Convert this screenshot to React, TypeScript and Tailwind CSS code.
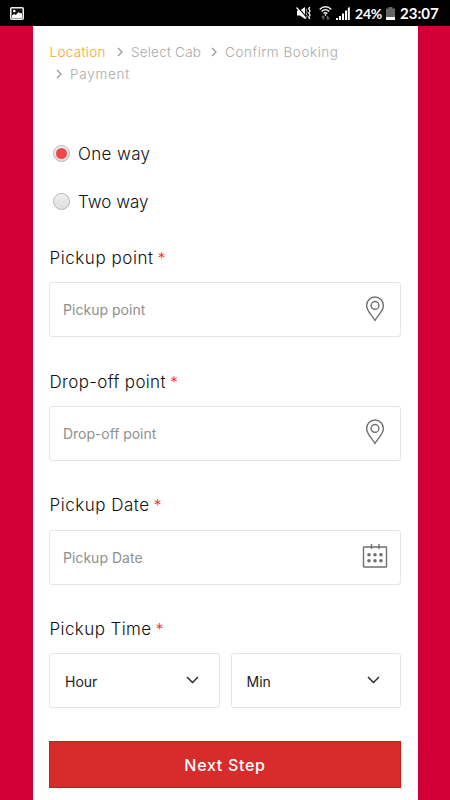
import React, { useState } from 'react';

const PinIcon = () => (
  <svg width="20" height="26" viewBox="0 0 20 26" fill="none" stroke="#707070" strokeWidth="1.4">
    <path d="M10 24.5C8.4 20.6 1.6 15.4 1.6 9.4a8.4 8.4 0 0 1 16.8 0c0 6-6.8 11.2-8.4 15.1Z" strokeLinejoin="round" />
    <circle cx="10" cy="9.4" r="3.9" />
  </svg>
);

const CalendarIcon = () => (
  <svg width="26" height="26" viewBox="0 0 26 26" fill="none" stroke="#707070" strokeWidth="1.4">
    <rect x="1.5" y="4" width="23" height="20" rx="0.5" />
    <path d="M9.5 1v5M17 1v5" />
    <g fill="#707070" stroke="none">
      <circle cx="7" cy="11.7" r="1.8" />
      <circle cx="13" cy="11.7" r="1.8" />
      <circle cx="19" cy="11.7" r="1.8" />
      <circle cx="7" cy="17.7" r="1.8" />
      <circle cx="13" cy="17.7" r="1.8" />
      <circle cx="19" cy="17.7" r="1.8" />
    </g>
  </svg>
);

const CrumbArrow = () => (
  <svg width="6" height="10" viewBox="0 0 6 10" fill="none" stroke="#999" strokeWidth="1.3" className="shrink-0">
    <path d="M1 1l4 4-4 4" />
  </svg>
);

const StatusBar = () => (
  <header className="flex h-[26px] items-center bg-black pl-[10px] pr-[12px] text-white">
    <svg width="14" height="13" viewBox="0 0 14 13">
      <rect x="0.75" y="0.75" width="12.5" height="11.5" rx="1" fill="#111" stroke="#eee" strokeWidth="1.5" />
      <path d="M2 11.3V8.4l2-1.3 1.8.8L8.6 5l1.4 1.6.8-.8 1.2 1v4.5Z" fill="#fff" />
      <circle cx="4.3" cy="4" r="1.3" fill="#fff" />
    </svg>

    <svg width="15" height="14" viewBox="0 0 15 14" className="ml-auto">
      <path d="M1 4.5h3L9 1v12L4 9.5H1Z" fill="#fff" />
      <path d="M1.5 1l9 10.5" stroke="#000" strokeWidth="1.2" />
      <path d="M.5 1.5l9.5 11" stroke="#fff" strokeWidth="1.2" />
      <path d="M11 2.5l-.8 1.8 1 1.8-1 1.8 1 1.8-1 1.8" stroke="#aaa" strokeWidth="1" fill="none" />
      <path d="M13.8 1l-1 2 1.2 2-1.2 2 1.2 2-1.2 2 1 2" stroke="#fff" strokeWidth="1.3" fill="none" />
    </svg>
    <svg width="13" height="14" viewBox="0 0 13 14" className="ml-[8px]" fill="none" stroke="#eee" strokeWidth="1.5">
      <path d="M.7 3.5C4-.1 9-.1 12.3 3.5M2.7 5.5c2.2-2.3 5.4-2.3 7.6 0M4.6 7.5c1.1-1.1 2.7-1.1 3.8 0" />
      <path d="M4.5 13.5V10M3 11.5l1.5-1.7M8.5 10v3.5M10 11.8l-1.5 1.7" stroke="#666" />
      <circle cx="6.5" cy="8.9" r="0.9" fill="#eee" stroke="none" />
    </svg>
    <svg width="14" height="13" viewBox="0 0 14 13" className="ml-[4px]" fill="#fff">
      <path d="M0 11h2v2H0zM3 9h2v4H3zM6 6.5h2V13H6zM9 3.5h2V13H9zM11.8 1l2-1v13h-2z" />
    </svg>
    <span className="ml-[5px] w-[29px] whitespace-nowrap font-['Lato',sans-serif] text-[14px] leading-[27px] font-bold tracking-[-0.2px]">24%</span>
    <svg width="9" height="13" viewBox="0 0 9 13" className="ml-[2px]">
      <path d="M2.5 0h4v1.5H9V10H0V1.5h2.5Z" fill="#666" />
      <path d="M0 10h9v3H0Z" fill="#fff" />
    </svg>
    <span className="ml-[5px] w-[38px] whitespace-nowrap font-['Lato',sans-serif] text-[15px] leading-[27px] font-bold">23:07</span>
  </header>
);

interface RadioProps {
  label: string;
  checked: boolean;
  onSelect: () => void;
  tracking: string;
}

const Radio: React.FC<RadioProps> = ({ label, checked, onSelect, tracking }) => (
  <button type="button" role="radio" aria-checked={checked} onClick={onSelect} className="flex h-6 items-center gap-2">
    <span className="flex h-[17px] w-[17px] items-center justify-center rounded-full border border-[#b5b5b5] bg-gradient-to-b from-[#f0f0f0] to-[#dedede]">
      {checked && <span className="h-[11px] w-[11px] rounded-full bg-[#ef4848]" />}
    </span>
    <span className={`pt-[2px] text-[17px] leading-6 font-light text-[#111] ${tracking}`}>{label}</span>
  </button>
);

interface LabelProps {
  text: string;
  tracking: string;
}

const Label: React.FC<LabelProps> = ({ text, tracking }) => (
  <div className={`h-6 pl-[0.5px] whitespace-nowrap text-[17px] leading-[25px] font-light text-[#111] ${tracking}`}>
    {text}
    <span className="ml-[4px] text-[16px] text-[#ff1f1f]">*</span>
  </div>
);

interface FieldProps extends LabelProps {
  icon: React.ReactNode;
  inputTracking: string;
}

const Field: React.FC<FieldProps> = ({ text, tracking, icon, inputTracking }) => (
  <div className="h-[123.7px]">
    <Label text={text} tracking={tracking} />
    <div className="mt-[12.3px] flex h-[55px] items-center justify-between rounded-[3px] border border-[#e5e5e5] pr-[12px] pl-[13px]">
      <input
        aria-label={text}
        placeholder={text}
        className={`w-60 bg-transparent text-[14px] font-normal outline-none placeholder:text-[#909090] ${inputTracking}`}
      />
      <span className="flex w-[26px] -translate-y-px justify-center">{icon}</span>
    </div>
  </div>
);

const TimeSelect: React.FC<{ label: string }> = ({ label }) => (
  <button type="button" className="flex h-[55px] flex-1 items-center justify-between rounded-[3px] border border-[#e5e5e5] pr-[20px] pl-[15px]">
    <span className="pt-px text-[14px] text-[#222]">{label}</span>
    <svg width="13" height="8" viewBox="0 0 13 8" fill="none" stroke="#222" strokeWidth="1.4" className="-translate-y-px">
      <path d="M1 1l5.5 5.5L12 1" />
    </svg>
  </button>
);

export default function App() {
  const [trip, setTrip] = useState('one');

  return (
    <div className="flex h-[800px] w-[450px] flex-col overflow-hidden bg-[#d00037] font-['Inter',sans-serif]">
      <StatusBar />
      <main className="ml-[33px] w-[385px] flex-1 bg-white pr-[17px] pl-[16px]">
        <nav className="h-[108px] pt-[15px] text-[13.5px] leading-[22px] font-light text-[#aaa]">
          <div className="flex items-center pl-[0.5px] whitespace-nowrap">
            <span className="w-[67.5px] tracking-[0.3px] text-[#f9a51a]">Location</span>
            <CrumbArrow />
            <span className="ml-[8px] w-[80px] tracking-[0.2px]">Select Cab</span>
            <CrumbArrow />
            <span className="ml-[8px] tracking-[0.55px]">Confirm Booking</span>
          </div>
          <div className="flex items-center pl-[7px]">
            <CrumbArrow />
            <span className="ml-[8px] tracking-[0.75px]">Payment</span>
          </div>
        </nav>

        <div role="radiogroup" className="flex flex-col gap-6 pt-[7px] pl-[4px]">
          <Radio label="One way" checked={trip === 'one'} onSelect={() => setTrip('one')} tracking="tracking-[0.35px]" />
          <Radio label="Two way" checked={trip === 'two'} onSelect={() => setTrip('two')} tracking="tracking-[0px]" />
        </div>

        <div className="pt-[33px]">
          <Field text="Pickup point" tracking="tracking-[0.55px]" inputTracking="tracking-[0.03px]" icon={<PinIcon />} />
          <Field text="Drop-off point" tracking="tracking-[0.35px]" inputTracking="tracking-[-0.05px]" icon={<PinIcon />} />
          <Field text="Pickup Date" tracking="tracking-[0.5px]" inputTracking="tracking-[0.02px]" icon={<CalendarIcon />} />
          <Label text="Pickup Time" tracking="tracking-[0.4px]" />
          <div className="mt-[12.3px] flex gap-[11px]">
            <TimeSelect label="Hour" />
            <TimeSelect label="Min" />
          </div>
        </div>

        <button type="button" className="mt-[33px] h-[47px] w-full border border-[#d91616] bg-[#d82b2b] text-[16px] font-medium tracking-[0.7px] text-white">
          Next Step
        </button>
      </main>
    </div>
  );
}
